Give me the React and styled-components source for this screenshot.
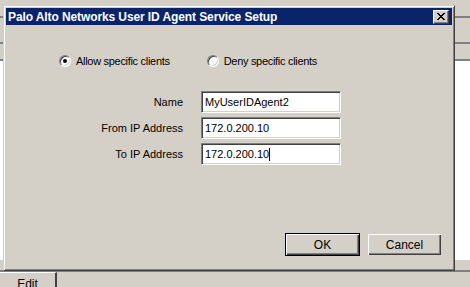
import styled, { createGlobalStyle } from 'styled-components';

const GlobalStyle = createGlobalStyle`
  html, body {
    margin: 0;
    padding: 0;
    background: #d4d0c8;
    font-family: "Liberation Sans", Arial, sans-serif;
    font-size: 11px;
  }
`;

const Desktop = styled.div`
  position: relative;
  width: 470px;
  height: 287px;
  overflow: hidden;
  background: #d4d0c8;
  display: grid;
  grid-template-rows: 18px 26px 17px 199px 12px 15px;
`;

const Band = styled.div`
  border-bottom: ${(p) => (p.$line ? '2px solid #808080' : 'none')};
  background: ${(p) => p.$bg || '#d4d0c8'};
`;

const TabRow = styled.div`
  display: flex;
`;

const Tab = styled.div`
  width: 55px;
  border-top: 1px solid #fff;
  border-right: 2px solid #404040;
  text-align: center;
  color: #000;
  padding-top: 4px;
  font-size: 12px;
`;

const Window = styled.div`
  position: absolute;
  left: 3px;
  top: 5px;
  width: 452px;
  height: 266px;
  box-sizing: border-box;
  background: #d4d0c8;
  border-top: 1px solid #d4d0c8;
  border-left: 1px solid #d4d0c8;
  border-right: 1px solid #404040;
  border-bottom: 1px solid #404040;
  box-shadow: inset 1px 1px 0 #fff, inset -1px -1px 0 #808080;
  padding: 2px;
  display: flex;
  flex-direction: column;
`;

const TitleBar = styled.div`
  height: 17px;
  background: #0a246a;
  display: flex;
  align-items: center;
  justify-content: space-between;
  padding: 0 3px 0 2px;
`;

const Title = styled.span`
  color: #fff;
  font-weight: bold;
  font-size: 12px;
  letter-spacing: -0.1px;
`;

const CloseButton = styled.div`
  width: 16px;
  height: 14px;
  box-sizing: border-box;
  background: #d4d0c8;
  border-top: 1px solid #fff;
  border-left: 1px solid #fff;
  border-right: 1px solid #404040;
  border-bottom: 1px solid #404040;
  box-shadow: inset -1px -1px 0 #808080;
  display: flex;
  align-items: center;
  justify-content: center;
`;

const Body = styled.div`
  flex: 1;
  display: flex;
  flex-direction: column;
  padding: 29px 0 0 53px;
`;

const RadioRow = styled.div`
  display: flex;
  gap: 37px;
  height: 14px;
  align-items: center;
`;

const RadioLabel = styled.label`
  display: flex;
  align-items: center;
  gap: 5px;
  color: #000;
  letter-spacing: -0.3px;
`;

const RadioCircle = styled.span`
  width: 12px;
  height: 12px;
  box-sizing: border-box;
  border-radius: 50%;
  background: #fff;
  border: 1px solid;
  border-color: #808080 #fff #fff #808080;
  box-shadow: inset 1px 1px 0 #404040, inset -1px -1px 0 #d4d0c8;
  display: flex;
  align-items: center;
  justify-content: center;
  &::after {
    content: '';
    width: 4px;
    height: 4px;
    border-radius: 50%;
    background: ${(p) => (p.$checked ? '#000' : 'transparent')};
  }
`;

const Form = styled.div`
  margin-top: 23px;
  display: grid;
  grid-template-columns: 124px 140px;
  column-gap: 18px;
  row-gap: 4px;
  align-items: center;
`;

const FieldLabel = styled.span`
  text-align: right;
  color: #000;
`;

const TextBox = styled.div`
  height: 22px;
  box-sizing: border-box;
  background: #fff;
  border-top: 1px solid #808080;
  border-left: 1px solid #808080;
  border-right: 1px solid #fff;
  border-bottom: 1px solid #fff;
  box-shadow: inset 1px 1px 0 #404040, inset -1px -1px 0 #d4d0c8;
  padding: 0 3px;
  display: flex;
  align-items: center;
  font-size: 11px;
  color: #000;
`;

const Caret = styled.span`
  display: inline-block;
  width: 1px;
  height: 13px;
  background: #000;
`;

const Buttons = styled.div`
  margin-top: auto;
  display: flex;
  justify-content: flex-end;
  gap: 7px;
  padding: 0 10px 12px 0;
`;

const Button = styled.div`
  width: 75px;
  height: 23px;
  box-sizing: border-box;
  background: #d4d0c8;
  display: flex;
  align-items: center;
  justify-content: center;
  color: #000;
  font-size: 12px;
  border: 1px solid ${(p) => (p.$default ? '#000' : 'transparent')};
  box-shadow: inset 1px 1px 0 #fff, inset -1px -1px 0 #404040, inset -2px -2px 0 #808080;
`;

function App() {
  return (
    <>
      <GlobalStyle />
      <Desktop>
        <Band $line />
        <Band $line />
        <Band $line />
        <Band $bg="#fff" />
        <Band $line />
        <TabRow>
          <Tab>Edit</Tab>
        </TabRow>
        <Window>
          <TitleBar>
            <Title>Palo Alto Networks User ID Agent Service Setup</Title>
            <CloseButton>
              <svg width="8" height="7" viewBox="0 0 8 7">
                <path d="M0 0h2v1h1v1h2V1h1V0h2v1H7v1H6v1H5v1h1v1h1v1h1v1H6V6H5V5H3v1H2v1H0V6h1V5h1V4h1V3H2V2H1V1H0z" fill="#000" />
              </svg>
            </CloseButton>
          </TitleBar>
          <Body>
            <RadioRow>
              <RadioLabel>
                <RadioCircle $checked />
                Allow specific clients
              </RadioLabel>
              <RadioLabel>
                <RadioCircle />
                Deny specific clients
              </RadioLabel>
            </RadioRow>
            <Form>
              <FieldLabel>Name</FieldLabel>
              <TextBox>MyUserIDAgent2</TextBox>
              <FieldLabel>From IP Address</FieldLabel>
              <TextBox>172.0.200.10</TextBox>
              <FieldLabel>To IP Address</FieldLabel>
              <TextBox>
                172.0.200.10
                <Caret />
              </TextBox>
            </Form>
          </Body>
          <Buttons>
            <Button $default>OK</Button>
            <Button>Cancel</Button>
          </Buttons>
        </Window>
      </Desktop>
    </>
  );
}

export default App;
